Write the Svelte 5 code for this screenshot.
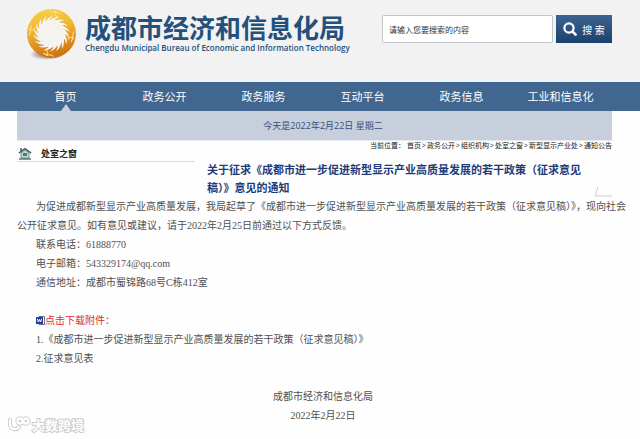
<script lang="ts">
	const navItems = ['首页', '政务公开', '政务服务', '互动平台', '政务信息', '工业和信息化'];
	const crumbs = ['首页', '政务公开', '组织机构', '处室之窗', '新型显示产业处', '通知公告'];
	const attachments = [
		'《成都市进一步促进新型显示产业高质量发展的若干政策（征求意见稿）》',
		'征求意见表'
	];
	const rays = Array.from({ length: 18 }, (_, i) => i * 20);
	const birds = [15, 105, 195, 285];

	let active = $state('首页');
	let query = $state('');
</script>

<header class="header">
	<a class="brand" href="#home">
		<svg class="emblem" viewBox="0 0 52 54" aria-hidden="true">
			<defs>
				<linearGradient id="gold" x1="0" y1="0" x2="0.2" y2="1">
					<stop offset="0" stop-color="#f9d548" />
					<stop offset="0.5" stop-color="#efb22e" />
					<stop offset="1" stop-color="#cf7416" />
				</linearGradient>
				<radialGradient id="shade">
					<stop offset="0.5" stop-color="#8a8178" stop-opacity="0.7" />
					<stop offset="1" stop-color="#8a8178" stop-opacity="0" />
				</radialGradient>
			</defs>
			<ellipse cx="21" cy="47" rx="17" ry="6" fill="url(#shade)" />
			<circle cx="26" cy="26" r="25" fill="url(#gold)" />
			<circle cx="26" cy="26" r="14" fill="#f5f3ee" />
			{#each rays as angle}
				<path
					d="M24 13 Q28 9 34 9 Q30 11 27 14 Z"
					fill="#f7f4ee"
					transform="rotate({angle} 26 26)"
				/>
			{/each}
			{#each birds as angle}
				<path
					d="M18 4 Q22 6 25 3 Q26 5 29 4 M25 3 Q23 8 28 8"
					fill="none"
					stroke="#fbe18a"
					stroke-width="1"
					transform="rotate({angle} 26 26)"
				/>
			{/each}
		</svg>
		<span class="brand-text">
			<span class="brand-cn">成都市经济和信息化局</span>
			<span class="brand-en">Chengdu Municipal Bureau of Economic and Information Technology</span>
		</span>
	</a>
	<form class="search" onsubmit={(e) => e.preventDefault()}>
		<input
			type="text"
			aria-label="搜索"
			placeholder="请输入您要搜索的内容"
			bind:value={query}
		/>
		<button type="submit">
			<svg viewBox="0 0 14 14" aria-hidden="true">
				<circle cx="6" cy="6" r="4.6" fill="none" stroke="#fff" stroke-width="2.2" />
				<path d="M9.6 9.6 L12.6 12.6" stroke="#fff" stroke-width="2.6" stroke-linecap="round" />
			</svg>
			搜 索
		</button>
	</form>
</header>

<nav class="nav">
	{#each navItems as item}
		<a href="#{item}" class:active={active === item} onclick={() => (active = item)}>{item}</a>
	{/each}
</nav>

<main class="page">
	<div class="date-bar">今天是2022年2月22日 星期二</div>

	<div class="top">
		<h2 class="section">
			<svg viewBox="0 0 14 13" aria-hidden="true">
				<path d="M3 6 L7 3 L11 6 V11 H3 Z" fill="#c3dad2" stroke="#6d8d88" />
				<path d="M1 6 L7 1.5 L13 6" fill="none" stroke="#2f4f4a" stroke-width="1.4" />
				<path d="M3 1 V4" stroke="#2f4f4a" stroke-width="1.4" />
				<rect x="5" y="6" width="4" height="3" fill="#477c73" />
				<path d="M1 12 H13" stroke="#36575a" stroke-width="1.2" />
			</svg>
			处室之窗
		</h2>
		<div class="heading">
			<div class="crumbs">
				<span class="crumbs-label">当前位置：</span>
				{#each crumbs as crumb, i}{#if i > 0}<span class="sep">&gt;</span>{/if}<a href="#{crumb}">{crumb}</a>{/each}
			</div>
			<h1>关于征求《成都市进一步促进新型显示产业高质量发展的若干政策（征求意见稿）》意见的通知</h1>
			<svg class="corner" viewBox="0 0 18 10" aria-hidden="true">
				<path d="M4 0 L1 9 H18" fill="none" stroke="#cfcfcf" />
			</svg>
		</div>
	</div>

	<article class="article">
		<p>
			为促进成都新型显示产业高质量发展，我局起草了《成都市进一步促进新型显示产业高质量发展的若干政策（征求意见稿）》，现向社会<br
			/>公开征求意见。如有意见或建议，请于2022年2月25日前通过以下方式反馈。
		</p>
		<p>联系电话：61888770</p>
		<p>电子邮箱：543329174@qq.com</p>
		<p>通信地址：成都市蜀锦路68号C栋412室</p>

		<div class="files">
			<p class="files-title">
				<svg viewBox="0 0 9 9" aria-hidden="true">
					<path d="M3 0.5 H8.5 V8.5 H3 Z" fill="#fff" stroke="#5b6fa5" />
					<rect y="1" width="7" height="7" fill="#24408e" />
					<path d="M1.3 2.8 L2.4 6 L3.5 3.4 L4.6 6 L5.7 2.8" fill="none" stroke="#fff" />
				</svg><a href="#files">点击下载附件：</a>
			</p>
			{#each attachments as name, i}
				<p>{i + 1}.<a href="#file-{i + 1}">{name}</a></p>
			{/each}
		</div>

		<footer class="sign">
			<div>成都市经济和信息化局</div>
			<div>2022年2月22日</div>
		</footer>
	</article>
</main>

<div class="watermark">
	<svg viewBox="0 0 24 18" aria-hidden="true">
		<g fill="none" stroke="#c4c4c4" stroke-width="4" stroke-linecap="round">
			<path d="M3 4 V9 A5 5 0 0 0 12 11" />
			<circle cx="13" cy="5" r="2.5" />
			<circle cx="19" cy="5" r="2.5" />
		</g>
		<g fill="none" stroke="#fff" stroke-width="2.4" stroke-linecap="round">
			<path d="M3 4 V9 A5 5 0 0 0 12 11" />
			<circle cx="13" cy="5" r="2.5" />
			<circle cx="19" cy="5" r="2.5" />
		</g>
	</svg>
	<span>大数跨境</span>
</div>

<style>
	:global(body) {
		margin: 0;
		background: #fefefe;
		color: #444;
		font-family: 'Open Sans', 'Noto Sans CJK SC', sans-serif;
	}

	a {
		color: inherit;
		text-decoration: none;
	}

	/* --- Header --- */
	.header {
		display: flex;
		align-items: flex-start;
		justify-content: space-between;
		box-sizing: border-box;
		height: 82px;
		padding: 8px 28px 0 26px;
		background: #f2f2f2;
		border-bottom: 2px solid #edf4fb;
	}

	.brand {
		display: flex;
		gap: 8px;
		color: #24517c;
	}

	.emblem {
		width: 51px;
		height: 53px;
	}

	.brand-text {
		display: flex;
		flex-direction: column;
		padding-top: 7px;
		white-space: nowrap;
	}

	.brand-cn {
		font-family: 'Liberation Sans', 'Noto Sans CJK SC', sans-serif;
		font-size: 26px;
		font-weight: 700;
		line-height: 28px;
	}

	.brand-en {
		font-family: 'Open Sans', sans-serif;
		font-size: 8px;
		font-weight: 600;
		line-height: 9px;
	}

	.search {
		display: flex;
		align-items: center;
		gap: 3px;
		padding-top: 7px;
	}

	.search input {
		box-sizing: border-box;
		width: 171px;
		height: 28px;
		padding: 0 6px;
		border: 1px solid #c3c7cb;
		border-radius: 2px;
		background: #fff;
		color: #333;
		font-family: inherit;
		font-size: 8px;
	}

	.search input::placeholder {
		color: #333;
		opacity: 1;
	}

	.search button {
		display: flex;
		align-items: center;
		justify-content: center;
		gap: 5px;
		width: 56px;
		height: 28px;
		padding: 0;
		border: 0;
		background: linear-gradient(#3a648f, #1b426f);
		color: #fff;
		font-family: inherit;
		font-size: 10px;
		white-space: nowrap;
	}

	.search button svg {
		width: 14px;
		height: 14px;
	}

	/* --- Navigation --- */
	.nav {
		display: grid;
		grid-template-columns: repeat(6, 1fr);
		padding: 0 30px 0 16px;
		background: #41668f;
		color: #fff;
		font-size: 11px;
		line-height: 29px;
		text-align: center;
	}

	.nav a {
		position: relative;
	}

	.nav a.active::after {
		content: '';
		position: absolute;
		bottom: 0;
		left: calc(50% - 5px);
		border: 5px solid transparent;
		border-top: 0;
		border-bottom: 7px solid #c7cfdd;
	}

	/* --- Page --- */
	.page {
		padding: 0 28px 0 17px;
	}

	.date-bar {
		padding-left: 17px;
		background: #c7cfdd;
		border-bottom: 1px solid #e6eaf2;
		color: #35507a;
		font-size: 9px;
		line-height: 29px;
		text-align: center;
	}

	.top {
		display: grid;
		grid-template-columns: 178px 1fr;
		gap: 12px;
	}

	.section {
		display: flex;
		align-items: center;
		align-self: start;
		gap: 9px;
		margin: 0;
		padding: 5px 0 0 1px;
		border-bottom: 1px solid #d8dbe6;
		color: #222;
		font-size: 9px;
		line-height: 15px;
	}

	.section svg {
		width: 14px;
		height: 13px;
	}

	.heading {
		position: relative;
	}

	.crumbs {
		color: #222;
		font-size: 7px;
		font-weight: 400;
		line-height: 10px;
		text-align: right;
		white-space: nowrap;
	}

	.sep {
		padding: 0 1px;
	}

	h1 {
		margin: 0;
		padding: 10px 25px 0 0;
		color: #1d3b78;
		font-size: 11px;
		font-weight: 700;
		line-height: 18px;
	}

	.corner {
		position: absolute;
		right: 0;
		bottom: 0;
		width: 18px;
		height: 10px;
	}

	/* --- Article --- */
	.article {
		margin-right: -17px;
		color: #505050;
		font-family: 'Liberation Serif', 'Noto Sans CJK SC', serif;
		font-size: 10px;
		line-height: 19px;
	}

	.article p {
		margin: 0;
		text-indent: 19px;
		white-space: nowrap;
	}

	.files,
	.sign {
		margin-top: 19px;
	}

	.files-title {
		color: #e0292c;
	}

	.files-title svg {
		width: 9px;
		height: 9px;
		vertical-align: -1px;
	}

	.sign {
		text-align: center;
	}

	/* --- Watermark --- */
	.watermark {
		position: absolute;
		bottom: 5px;
		left: 7px;
		display: flex;
		align-items: center;
		gap: 1px;
		color: #fff;
		font-family: 'Noto Sans CJK SC', sans-serif;
		font-size: 13px;
		font-weight: 700;
		line-height: 18px;
		-webkit-text-stroke: 2px #cccccc;
		paint-order: stroke fill;
	}

	.watermark svg {
		width: 24px;
		height: 18px;
	}
</style>
